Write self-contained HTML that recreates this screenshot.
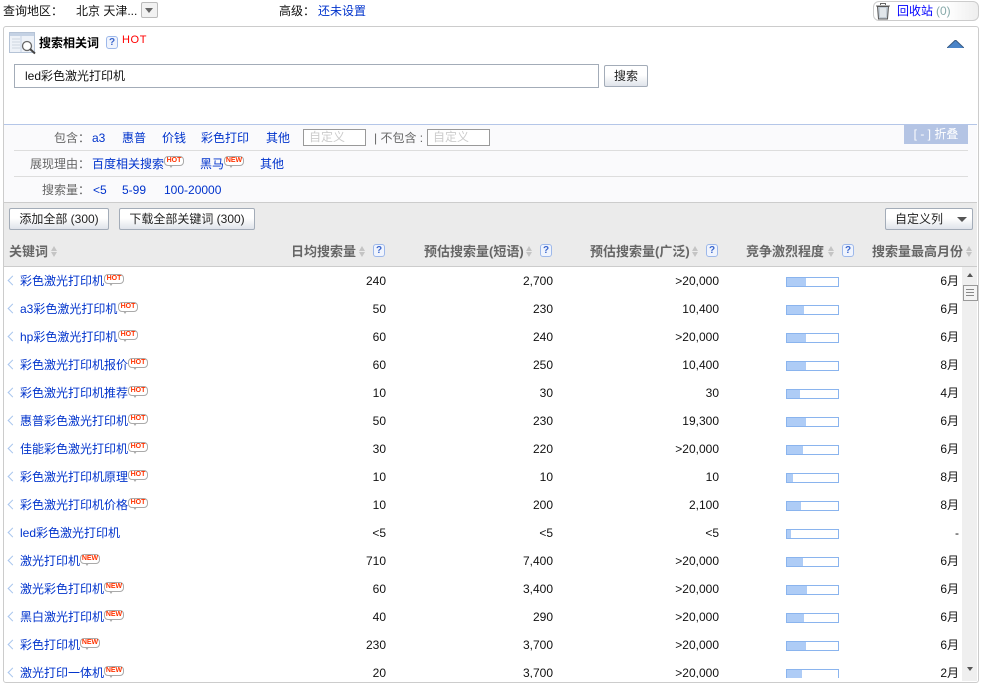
<!DOCTYPE html>
<html><head><meta charset="utf-8">
<style>
html,body{margin:0;padding:0;background:#fff}
body{width:982px;height:686px;position:relative;overflow:hidden;font:12px/14px "Liberation Sans","WenQuanYi Zen Hei","Noto Sans CJK SC",sans-serif;color:#111}
div,span,a{position:absolute;white-space:nowrap}
a{color:#03c;text-decoration:none}
.g{color:#666}
.q{width:10px;height:11px;border:1px solid #9db8ea;border-radius:3px;background:#f0f4fd;color:#3a66cc;font:bold 10px/11px "Liberation Sans",sans-serif;text-align:center}
.btn{height:20px;line-height:20px;border:1px solid #a3acb8;border-radius:2px;background:linear-gradient(#fff,#fff 45%,#dfe3ea);text-align:center;color:#222}
.inp{width:61px;height:15px;border:1px solid #999;background:#fff;color:#ccc;line-height:15px;text-indent:5px}
.l{left:14px;width:954px;height:1px;background:#ddd}
.hd{top:244px;font-size:13px;font-weight:bold;color:#666;line-height:15px}
.s{top:246px;width:7px;height:11px}
.s:before,.s:after{content:"";position:absolute;left:0;width:0;height:0;border-left:3.5px solid transparent;border-right:3.5px solid transparent}
.s:before{top:0;border-bottom:5px solid #c4c4c4}
.s:after{top:6px;border-top:5px solid #c4c4c4}
.t{width:18px;height:8px;border:1px solid #aaa;border-radius:4px;background:#fff;color:#f30;font:bold 7px/8px "Liberation Sans",sans-serif;text-align:center}
.t:after{content:"";position:absolute;left:4px;top:8px;border:2px solid transparent;border-top:3px solid #aaa;border-bottom:0}
.r{left:0;width:960px;height:28px}
.c{left:9px;top:10px;width:6px;height:6px;border-left:1.5px solid #a9c6ee;border-bottom:1.5px solid #a9c6ee;transform:rotate(45deg)}
.k{left:20px;top:7px}
.r .t{top:7px}
.n{width:80px;text-align:right;top:7px}
.n1{left:306px}.n2{left:473px}.n3{left:639px}.m{left:879px}
.b{left:786px;top:10px;width:51px;height:8px;border:1px solid #8ab4ee}
.b span{left:0;top:0;height:8px;background:#aeccf6}
</style></head><body>

<div style="left:3px;top:4px">查询地区：</div>
<div style="left:76px;top:4px">北京 天津...</div>
<div style="left:141px;top:2px;width:15px;height:14px;border:1px solid #bbb;border-radius:2px;background:#f2f2f2"><span style="left:3px;top:5px;border:4px solid transparent;border-top:5px solid #666;border-bottom:0"></span></div>
<div style="left:279px;top:4px">高级：</div>
<a style="left:318px;top:4px">还未设置</a>

<div style="left:873px;top:1px;width:104px;height:18px;border:1px solid #ccc;border-radius:6px;background:linear-gradient(90deg,#fff 70%,#eee)"></div>
<svg style="position:absolute;left:875px;top:2px" width="16" height="18" viewBox="0 0 16 18"><path d="M1 4h14M5.500 3V1.500h5V3" stroke="#666" fill="none"/><path d="M2.500 4.500h11l-1 12.500h-9z" fill="#c3ccd4" stroke="#555"/><path d="M6 6v9M8 6v9M10 6v9" stroke="#fff"/></svg>
<a style="left:897px;top:4px;color:#00f">回收站</a>
<div style="left:936px;top:4px;color:#8aa">(0)</div>

<div style="left:3px;top:26px;width:974px;height:655px;border:1px solid #ccc;border-radius:3px"></div>

<svg style="position:absolute;left:9px;top:32px" width="27" height="23" viewBox="0 0 27 23"><rect x=".5" y=".5" width="25" height="20" fill="#eef2f8" stroke="#b5c3d6"/><rect x="1" y="1" width="24" height="3" fill="#c5d2e4"/><path d="M3 7h8M3 10h8M3 13h8M3 16h8" stroke="#cfd6e0"/><path d="M12 4v16" stroke="#c5d2e4"/><circle cx="18" cy="14" r="4.500" fill="#fff" stroke="#666" stroke-width="1.300"/><path d="M21 17l5 4.500" stroke="#444" stroke-width="2"/></svg>
<div style="left:39px;top:36px;font-size:12px;font-weight:bold;color:#000">搜索相关词</div>
<div class="q" style="left:106px;top:36px">?</div>
<div style="left:122px;top:35px;color:#f00;font-size:11px;line-height:11px;letter-spacing:.6px">HOT</div>
<svg style="position:absolute;left:947px;top:40px" width="17" height="8" viewBox="0 0 17 8"><path d="M0 8L8.500 0 17 8z" fill="#4a84c8"/><path d="M0 8L8.500 0 17 8" fill="none" stroke="#36587f"/></svg>

<div style="left:14px;top:64px;width:583px;height:22px;border:1px solid #a3acb8;background:#fff;line-height:22px;text-indent:10px">led彩色激光打印机</div>
<div class="btn" style="left:604px;top:65px;width:42px">搜索</div>

<div style="left:4px;top:124px;width:973px;height:78px;background:#fafafc;border-top:1px solid #b4c6e8"></div>
<div style="left:904px;top:125px;width:64px;height:19px;background:#b4c4e4;color:#fff;line-height:19px;text-align:center">[ - ] 折叠</div>

<div class="g" style="left:54px;top:131px">包含：</div>
<a style="left:92px;top:131px">a3</a><a style="left:122px;top:131px">惠普</a><a style="left:162px;top:131px">价钱</a><a style="left:201px;top:131px">彩色打印</a><a style="left:266px;top:131px">其他</a>
<div class="inp" style="left:303px;top:129px">自定义</div>
<div class="g" style="left:374px;top:131px">| 不包含 :</div>
<div class="inp" style="left:427px;top:129px">自定义</div>
<div class="l" style="top:150px"></div>

<div class="g" style="left:30px;top:157px">展现理由：</div>
<a style="left:92px;top:157px">百度相关搜索</a><span class="t" style="left:164px;top:156px">HOT</span>
<a style="left:200px;top:157px">黑马</a><span class="t" style="left:224px;top:156px">NEW</span>
<a style="left:260px;top:157px">其他</a>
<div class="l" style="top:176px"></div>

<div class="g" style="left:42px;top:183px">搜索量：</div>
<a style="left:93px;top:183px">&lt;5</a><a style="left:122px;top:183px">5-99</a><a style="left:164px;top:183px">100-20000</a>

<div style="left:4px;top:202px;width:973px;height:33px;background:#ebebeb;border-top:1px solid #ccc"></div>
<div class="btn" style="left:9px;top:208px;width:98px">添加全部 (300)</div>
<div class="btn" style="left:119px;top:208px;width:134px">下载全部关键词 (300)</div>
<div class="btn" style="left:885px;top:208px;width:86px;text-align:left;text-indent:9px">自定义列<span style="left:71px;top:8px;border:5px solid transparent;border-top:5px solid #555;border-bottom:0"></span></div>

<div style="left:4px;top:236px;width:973px;height:30px;background:#ebebeb;border-bottom:1px solid #ccc"></div>
<div class="hd" style="left:9px">关键词</div><div class="s" style="left:51px"></div>
<div class="hd" style="left:291px">日均搜索量</div><div class="s" style="left:359px"></div><div class="q" style="left:373px;top:244px">?</div>
<div class="hd" style="left:424px">预估搜索量(短语)</div><div class="s" style="left:526px"></div><div class="q" style="left:540px;top:244px">?</div>
<div class="hd" style="left:590px">预估搜索量(广泛)</div><div class="s" style="left:692px"></div><div class="q" style="left:706px;top:244px">?</div>
<div class="hd" style="left:746px">竞争激烈程度</div><div class="s" style="left:828px"></div><div class="q" style="left:842px;top:244px">?</div>
<div class="hd" style="left:872px">搜索量最高月份</div><div class="s" style="left:966px"></div>

<div style="left:0;top:267px;width:977px;height:411px;overflow:hidden">
<div class="r" style="top:0;left:0"><span class="c"></span><a class="k">彩色激光打印机</a><span class="t" style="left:104px">HOT</span><span class="n n1">240</span><span class="n n2">2,700</span><span class="n n3">&gt;20,000</span><span class="b"><span style="width:19px"></span></span><span class="n m">6月</span></div>
<div class="r" style="top:28px"><span class="c"></span><a class="k">a3彩色激光打印机</a><span class="t" style="left:118px">HOT</span><span class="n n1">50</span><span class="n n2">230</span><span class="n n3">10,400</span><span class="b"><span style="width:17px"></span></span><span class="n m">6月</span></div>
<div class="r" style="top:56px"><span class="c"></span><a class="k">hp彩色激光打印机</a><span class="t" style="left:118px">HOT</span><span class="n n1">60</span><span class="n n2">240</span><span class="n n3">&gt;20,000</span><span class="b"><span style="width:19px"></span></span><span class="n m">6月</span></div>
<div class="r" style="top:84px"><span class="c"></span><a class="k">彩色激光打印机报价</a><span class="t" style="left:128px">HOT</span><span class="n n1">60</span><span class="n n2">250</span><span class="n n3">10,400</span><span class="b"><span style="width:19px"></span></span><span class="n m">8月</span></div>
<div class="r" style="top:112px"><span class="c"></span><a class="k">彩色激光打印机推荐</a><span class="t" style="left:128px">HOT</span><span class="n n1">10</span><span class="n n2">30</span><span class="n n3">30</span><span class="b"><span style="width:13px"></span></span><span class="n m">4月</span></div>
<div class="r" style="top:140px"><span class="c"></span><a class="k">惠普彩色激光打印机</a><span class="t" style="left:128px">HOT</span><span class="n n1">50</span><span class="n n2">230</span><span class="n n3">19,300</span><span class="b"><span style="width:19px"></span></span><span class="n m">6月</span></div>
<div class="r" style="top:168px"><span class="c"></span><a class="k">佳能彩色激光打印机</a><span class="t" style="left:128px">HOT</span><span class="n n1">30</span><span class="n n2">220</span><span class="n n3">&gt;20,000</span><span class="b"><span style="width:16px"></span></span><span class="n m">6月</span></div>
<div class="r" style="top:196px"><span class="c"></span><a class="k">彩色激光打印机原理</a><span class="t" style="left:128px">HOT</span><span class="n n1">10</span><span class="n n2">10</span><span class="n n3">10</span><span class="b"><span style="width:6px"></span></span><span class="n m">8月</span></div>
<div class="r" style="top:224px"><span class="c"></span><a class="k">彩色激光打印机价格</a><span class="t" style="left:128px">HOT</span><span class="n n1">10</span><span class="n n2">200</span><span class="n n3">2,100</span><span class="b"><span style="width:14px"></span></span><span class="n m">8月</span></div>
<div class="r" style="top:252px"><span class="c"></span><a class="k">led彩色激光打印机</a><span class="n n1">&lt;5</span><span class="n n2">&lt;5</span><span class="n n3">&lt;5</span><span class="b"><span style="width:4px"></span></span><span class="n m">-</span></div>
<div class="r" style="top:280px"><span class="c"></span><a class="k">激光打印机</a><span class="t" style="left:80px">NEW</span><span class="n n1">710</span><span class="n n2">7,400</span><span class="n n3">&gt;20,000</span><span class="b"><span style="width:16px"></span></span><span class="n m">6月</span></div>
<div class="r" style="top:308px"><span class="c"></span><a class="k">激光彩色打印机</a><span class="t" style="left:104px">NEW</span><span class="n n1">60</span><span class="n n2">3,400</span><span class="n n3">&gt;20,000</span><span class="b"><span style="width:20px"></span></span><span class="n m">6月</span></div>
<div class="r" style="top:336px"><span class="c"></span><a class="k">黑白激光打印机</a><span class="t" style="left:104px">NEW</span><span class="n n1">40</span><span class="n n2">290</span><span class="n n3">&gt;20,000</span><span class="b"><span style="width:17px"></span></span><span class="n m">6月</span></div>
<div class="r" style="top:364px"><span class="c"></span><a class="k">彩色打印机</a><span class="t" style="left:80px">NEW</span><span class="n n1">230</span><span class="n n2">3,700</span><span class="n n3">&gt;20,000</span><span class="b"><span style="width:19px"></span></span><span class="n m">6月</span></div>
<div class="r" style="top:392px"><span class="c"></span><a class="k">激光打印一体机</a><span class="t" style="left:104px">NEW</span><span class="n n1">20</span><span class="n n2">3,700</span><span class="n n3">&gt;20,000</span><span class="b"><span style="width:15px"></span></span><span class="n m">2月</span></div>
</div>

<div style="left:962px;top:267px;width:15px;height:414px;background:#efefef"></div>
<div style="left:967px;top:273px;border:3.500px solid transparent;border-bottom:4px solid #555;border-top:0"></div>
<div style="left:963px;top:285px;width:13px;height:14px;border:1px solid #999;background:#f4f4f4"></div>
<svg style="position:absolute;left:966px;top:289px" width="8" height="7"><path d="M0 .5h8M0 3.500h8M0 6.500h8" stroke="#888"/></svg>
<div style="left:967px;top:667px;border:3.500px solid transparent;border-top:4px solid #555;border-bottom:0"></div>

</body></html>
